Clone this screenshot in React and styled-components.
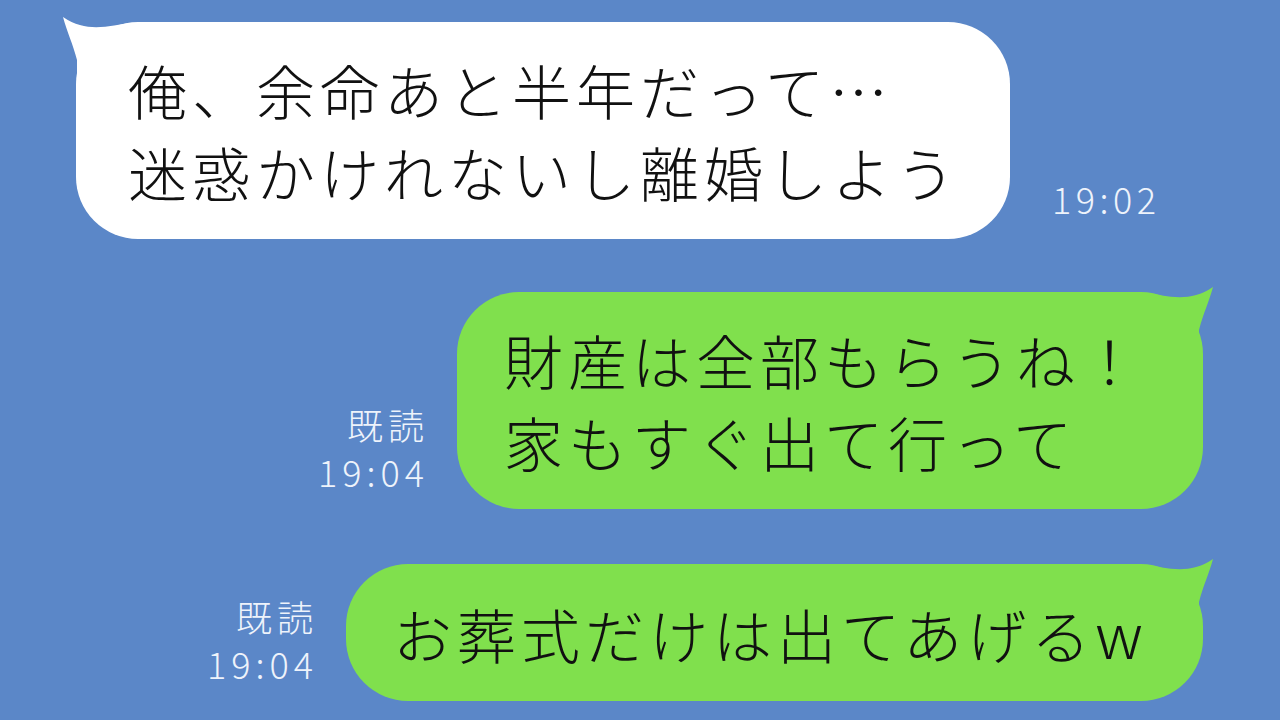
import styled, { createGlobalStyle } from "styled-components";

const GlobalStyle = createGlobalStyle`
  html, body {
    margin: 0;
    padding: 0;
    background: #5b87c8;
  }
  #root {
    width: 1280px;
    height: 720px;
    overflow: hidden;
  }
`;

const FONT = `"Noto Sans CJK JP", "Noto Sans", sans-serif`;

function Horn({ color, mirrored }) {
  return (
    <HornSvg $mirrored={mirrored} viewBox="0 0 70 70" width="70" height="70">
      <path
        d="M1 3 C 5 18, 11 30, 15 46 L 15 70 L 70 70 L 70 9 C 48 11, 26 20, 1 3 Z"
        fill={color}
      />
    </HornSvg>
  );
}

function App() {
  return (
    <>
      <GlobalStyle />
      <Screen>
        <Row>
          <Bubble $bg="#ffffff" $width={934} $padLeft={52}>
            <Horn color="#ffffff" />
            俺、余命あと半年だって…
            <br />
            迷惑かけれないし離婚しよう
          </Bubble>
          <Time>19:02</Time>
        </Row>

        <Row $mine $gap={55}>
          <Meta>
            <span>既読</span>
            <span>19:04</span>
          </Meta>
          <Bubble $bg="#80e04d" $width={746} $padLeft={47}>
            <Horn color="#80e04d" mirrored />
            財産は全部もらうね！
            <br />
            家もすぐ出て行って
          </Bubble>
        </Row>

        <Row $mine $gap={0}>
          <Meta>
            <span>既読</span>
            <span>19:04</span>
          </Meta>
          <Bubble $bg="#80e04d" $width={857} $padLeft={47}>
            <Horn color="#80e04d" mirrored />
            お葬式だけは出てあげる<Latin>w</Latin>
          </Bubble>
        </Row>
      </Screen>
    </>
  );
}

const Screen = styled.div`
  height: 720px;
  box-sizing: border-box;
  padding: 22px 77px 0 76px;
  display: flex;
  flex-direction: column;
  font-family: ${FONT};
`;

const Row = styled.div`
  display: flex;
  align-items: flex-end;
  justify-content: ${(p) => (p.$mine ? "flex-end" : "flex-start")};
  margin-bottom: ${(p) => (p.$gap !== undefined ? p.$gap : 53)}px;
`;

const Bubble = styled.div`
  position: relative;
  box-sizing: border-box;
  width: ${(p) => p.$width}px;
  padding: 27px 0 26px ${(p) => p.$padLeft}px;
  background: ${(p) => p.$bg};
  border-radius: 62px;
  color: #111;
  font-size: 59px;
  font-weight: 300;
  line-height: 82px;
  letter-spacing: 5px;
  white-space: nowrap;
`;

const Latin = styled.span`
  font-size: 62px;
  letter-spacing: 0;
`;

const HornSvg = styled.svg`
  position: absolute;
  top: -8px;
  ${(p) => (p.$mirrored ? "right: -11px;" : "left: -14px;")}
  transform: ${(p) => (p.$mirrored ? "scaleX(-1)" : "none")};
`;

const Time = styled.div`
  margin: 0 0 19px 42px;
  color: #eef3fb;
  font-size: 36px;
  font-weight: 300;
  line-height: 44px;
  letter-spacing: 4.5px;
`;

const Meta = styled.div`
  display: flex;
  flex-direction: column;
  align-items: flex-end;
  margin: 0 28px 14px 0;
  color: #eef3fb;
  font-size: 36px;
  font-weight: 300;
  line-height: 47px;
  letter-spacing: 5px;
`;

export default App;
